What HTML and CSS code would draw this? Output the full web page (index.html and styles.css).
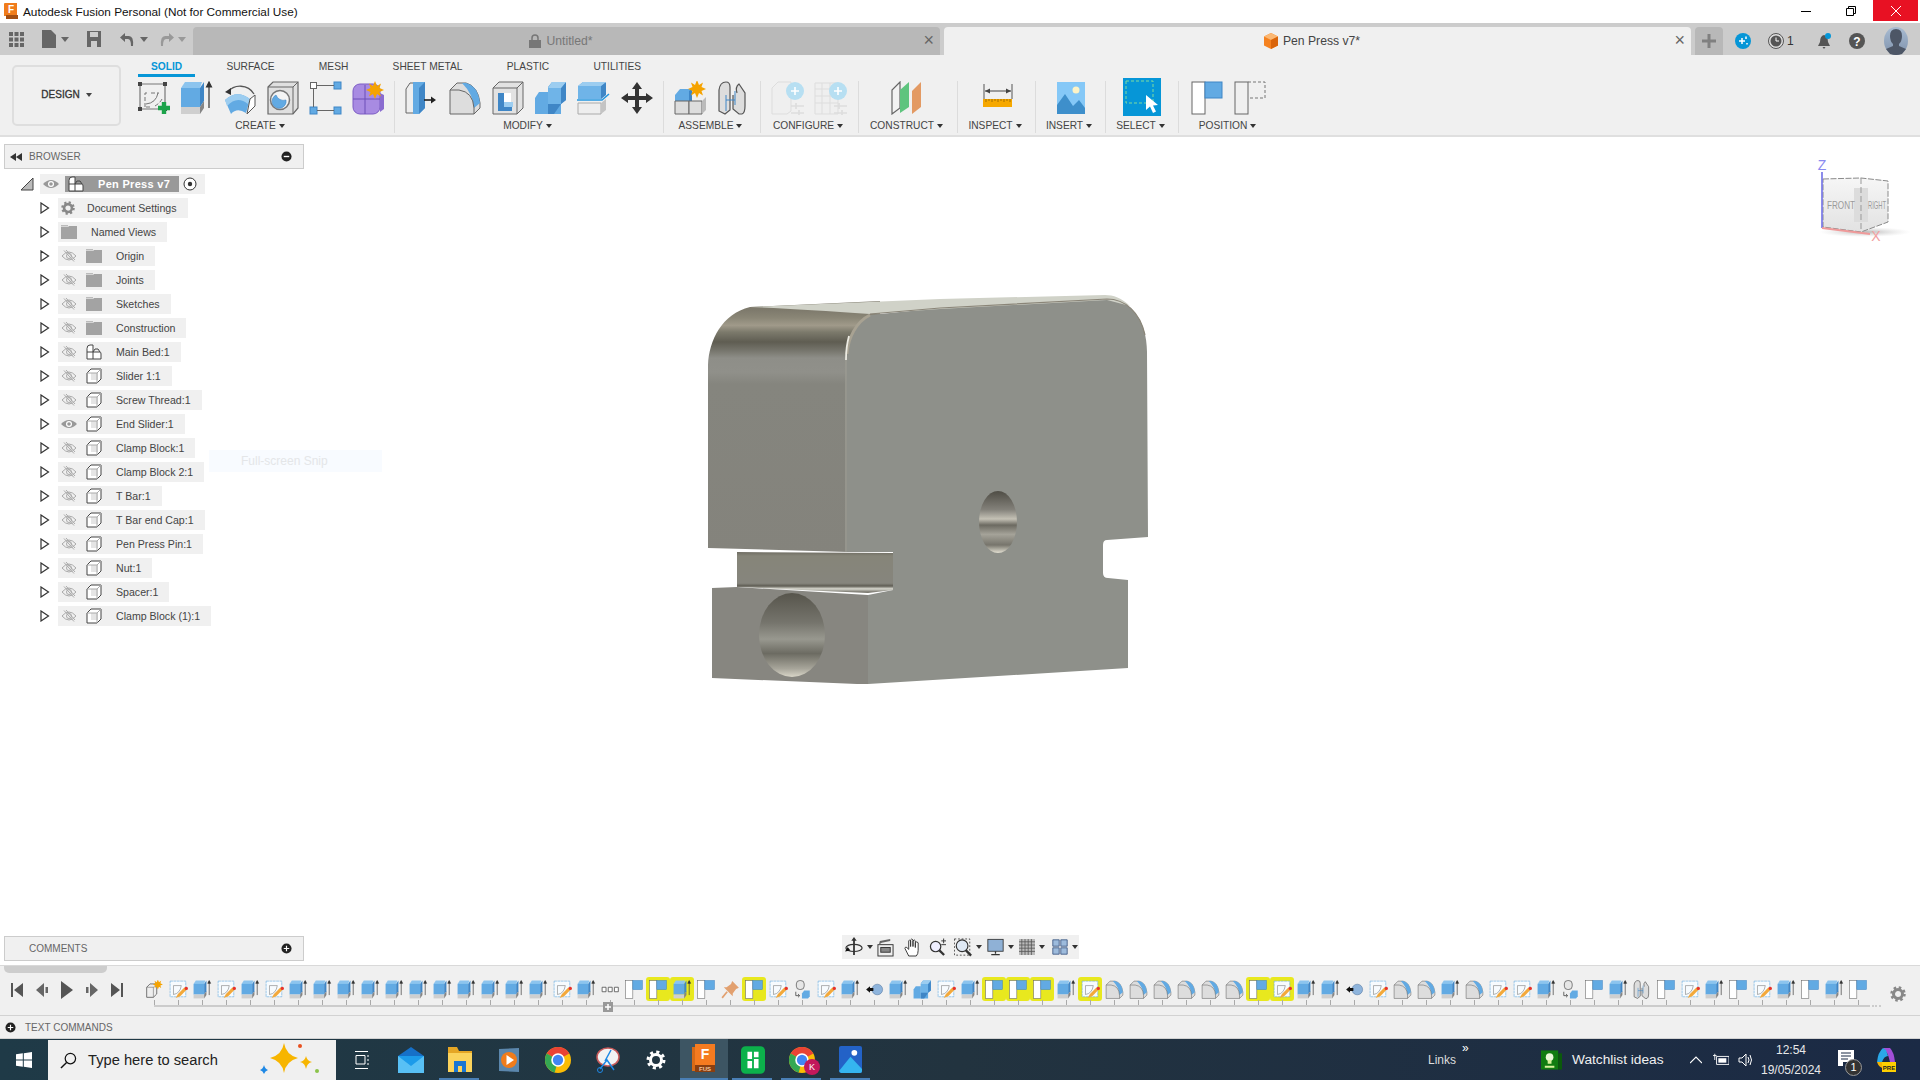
FILE: index.html
```html
<!DOCTYPE html>
<html lang="en">
<head>
<meta charset="utf-8">
<title>Autodesk Fusion Personal</title>
<link rel="stylesheet" href="styles.css">
</head>
<body>
<svg class="defs" aria-hidden="true">
<defs>
<g id="star"><polygon points="0,-9 2,-4 6,-6.5 4.5,-2 9,0 4.5,2 6,6.5 2,4 0,9 -2,4 -6,6.5 -4.5,2 -9,0 -4.5,-2 -6,-6.5 -2,-4" fill="#f5a300"/></g>
<symbol id="sk" viewBox="0 0 34 34"><path d="M3 3H28V28H3Z" fill="none" stroke="#777" stroke-width="1.2"/><path d="M1 1h4v4H1zM26 1h4v4h-4zM1 26h4v4H1zM26 26h4v4h-4z" fill="#444"/><path d="M8 26V12H11M14 12H22M25 18Q23 22 18 25M9 26H14" fill="none" stroke="#777" stroke-dasharray="4 2"/><path d="M21 12Q19 22 9 23" fill="none" stroke="#777"/><path d="M21 27H33M27 21V33" stroke="#1ca34a" stroke-width="4.4"/></symbol>
<symbol id="ex" viewBox="0 0 34 34"><path d="M1 7L5 1H22L20 7Z" fill="#8cc4ee"/><path d="M1 7H20V26H1Z" fill="#62aae3"/><path d="M20 7L24 1V20L20 26Z" fill="#3f86c6"/><path d="M1 26H20V33H1Z" fill="#cfcfcf"/><path d="M20 26L24 20V27L20 33Z" fill="#858585"/><path d="M29 27V2M26.5 6L29 1L31.5 6Z" stroke="#333" stroke-width="1.2" fill="#333"/></symbol>
<symbol id="rv" viewBox="0 0 34 34"><path d="M5 11C11 3 25 3 31 13" fill="none" stroke="#555" stroke-width="1.3"/><path d="M2 11L8 7L8 14Z" fill="#333"/><path d="M2 19Q14 8 27 18L23 32Q14 26 8 33Z" fill="#62aae3"/><path d="M2 19Q14 8 27 18L25 23Q14 14 4 25Z" fill="#9ccdf0"/><path d="M27 18L32 14V25L24 33Z" fill="#fff" stroke="#555"/></symbol>
<symbol id="ho" viewBox="0 0 34 34"><path d="M2 6L7 1H32V27L27 33H2Z" fill="#e0e0e0" stroke="#666" stroke-width="1.2"/><path d="M2 6H27V33M27 6L32 1" fill="none" stroke="#666"/><circle cx="14" cy="19" r="9.5" fill="#f4f4f4" stroke="#777" stroke-width="1.5"/><path d="M10 14A7 7 0 1 0 20 19A8 8 0 0 1 10 14Z" fill="#62aae3" stroke="#3f86c6" stroke-width=".6"/></symbol>
<symbol id="bx" viewBox="0 0 34 34"><rect x="1.5" y="1.5" width="6" height="6" fill="#fff" stroke="#666"/><rect x="25" y="1" width="7" height="7" fill="#62aae3" stroke="#3f86c6"/><rect x="1" y="26" width="7" height="7" fill="#62aae3" stroke="#3f86c6"/><rect x="25" y="26" width="7" height="7" fill="#62aae3" stroke="#3f86c6"/><path d="M8 4.500H25M4.500 8V26M8 29.500H25" stroke="#666" fill="none"/></symbol>
<symbol id="fm" viewBox="0 0 34 34"><rect x="1" y="3" width="27" height="30" rx="7" fill="#a88be2" stroke="#7c5cc4"/><path d="M1 18H28M13 4V33" stroke="#6d4fb8" stroke-width="1"/><path d="M28 12L32 14V28L28 31Z" fill="#8a6cd0"/><use href="#star" x="23" y="9" /></symbol>
<symbol id="pp" viewBox="0 0 34 34"><path d="M1 32V8L5 2H9V32Z" fill="#eee" stroke="#666"/><path d="M8 1H20V27L14 33H8Z" fill="#62aae3"/><path d="M14 7L20 1V27L14 33Z" fill="#3f86c6"/><path d="M19 19H27" stroke="#222" stroke-width="1.6"/><path d="M26 15.500L31 19L26 22.500Z" fill="#222"/></symbol>
<symbol id="fi" viewBox="0 0 34 34"><path d="M2 33V9L9 2H18Q30 5 32 22V27L26 33Z" fill="#ddd" stroke="#666"/><path d="M14 2H18Q30 5 32 22L26 27Q25 13 14 2Z" fill="#62aae3"/><path d="M2 9H11Q25 11 26 27V33" fill="none" stroke="#666"/></symbol>
<symbol id="sh" viewBox="0 0 34 34"><path d="M2 33V7L8 1H32V27L26 33Z" fill="#e2e2e2" stroke="#666"/><path d="M2 7H26V33M26 7L32 1" fill="none" stroke="#666"/><path d="M7 12H13V26H21V30H7Z" fill="#3f86c6"/><path d="M13 12L20 12V26H13Z" fill="#fff"/><path d="M13 21H22V26H13Z" fill="#9ccdf0"/></symbol>
<symbol id="cb" viewBox="0 0 34 34"><path d="M1 17L5 11H14V33H1Z" fill="#62aae3"/><path d="M14 6L18 1H32V19L27 23V33L22 33H14Z" fill="#62aae3"/><path d="M14 7H27V23H14Z" fill="#6fb4e8"/><path d="M27 7L32 1V19L27 23Z" fill="#3f86c6"/><path d="M14 7L18 1H32L27 7Z" fill="#9ccdf0"/><path d="M14 23V33L20 33L27 23Z" fill="#3f86c6"/></symbol>
<symbol id="sp" viewBox="0 0 34 34"><path d="M1 5L6 1H28V14L24 18H1Z" fill="#62aae3"/><path d="M1 5H24V18H1Z" fill="#6fb4e8"/><path d="M24 5L29 1V14L24 18Z" fill="#3f86c6"/><path d="M1 5L6 1H29L24 5Z" fill="#9ccdf0"/><path d="M0 19H25L32 13" stroke="#2496df" stroke-width="1.6" fill="none"/><path d="M1 22H24V33H1Z" fill="#eee" stroke="#aaa"/><path d="M24 22L29 18V29L24 33Z" fill="#c4c4c4"/></symbol>
<symbol id="mv" viewBox="0 0 34 34"><path d="M17 1L22 8H19V15H26V12L33 17L26 22V19H19V26H22L17 33L12 26H15V19H8V22L1 17L8 12V15H15V8H12Z" fill="#333"/></symbol>
<symbol id="nc" viewBox="0 0 34 34"><path d="M1 14L6 8H17V20H1Z" fill="#62aae3"/><path d="M15 10L18 8V20H15Z" fill="#3f86c6"/><path d="M1 20H15V33H1Z" fill="#ddd" stroke="#666"/><path d="M15 20H28V33H15Z" fill="#ddd" stroke="#666"/><path d="M28 20L32 16V29L28 33Z" fill="#bbb"/><use href="#star" x="23" y="8"/></symbol>
<symbol id="nw" viewBox="0 0 34 34"><path d="M3 31V13L9 7H21V25L15 31Z" fill="#eee" stroke="#666" stroke-width="1.6"/><path d="M3 13H15V31M15 13L21 7" fill="none" stroke="#666"/><use href="#star" x="23" y="8"/></symbol>
<symbol id="jt" viewBox="0 0 34 34"><path d="M2 30V9Q3 1 9 1Q13 1 13 6V29L8 33Z" fill="#ddd" stroke="#555" stroke-width="1.2"/><path d="M16 14V28L22 33H25Q28 32 28 25V12L22 3Q18 6 20 12" fill="#ddd" stroke="#555" stroke-width="1.2"/><path d="M9 14V30M18 10V24M9 19H18" stroke="#3f86c6"/></symbol>
<symbol id="cf1" viewBox="0 0 34 34"><path d="M1 33V7L7 1H20V30L16 33Z" fill="#efefef" stroke="#ddd"/><circle cx="24" cy="10" r="9" fill="#b7dff2"/><path d="M24 6V14M20 10H28" stroke="#fff" stroke-width="1.6"/><path d="M20 25H33M20 32H33M25 22V28M28 29V34" stroke="#ddd" stroke-width="1.6"/></symbol>
<symbol id="cf2" viewBox="0 0 34 34"><path d="M1 2H24V33H1Z" fill="#efefef" stroke="#ddd"/><path d="M1 8H24M1 15H24M1 22H24M8 2V33M16 2V33" stroke="#ddd"/><circle cx="24" cy="10" r="9" fill="#b7dff2"/><path d="M24 6V14M20 10H28" stroke="#fff" stroke-width="1.6"/><path d="M20 25H33M20 32H33M25 22V28M28 29V34" stroke="#ddd" stroke-width="1.6"/></symbol>
<symbol id="cn" viewBox="0 0 34 34"><path d="M1 33V9L9 1V27L1 33Z" fill="#f2f2f2" stroke="#666" stroke-width="1.2"/><path d="M9 32V9L18 1V26Z" fill="#5ec47e"/><path d="M21 33V10L30 1V26Z" fill="#e39a63"/></symbol>
<symbol id="im" viewBox="0 0 30 34"><rect x="1" y="1" width="28" height="32" fill="#85c8f7"/><circle cx="20" cy="9" r="3.500" fill="#fdf3c6"/><path d="M1 24L9 13L17 25L23 19L29 27V33H1Z" fill="#3e8fcb"/></symbol>
<symbol id="sl" viewBox="0 0 38 38"><rect width="38" height="38" fill="#0696d7"/><rect x="3" y="3" width="27" height="22" fill="none" stroke="#7fdc9f" stroke-dasharray="3 2"/><path d="M23 17V32L27 28.500L30 35L33 33.500L30 27.500L35 27Z" fill="#fff"/></symbol>
<symbol id="fl" viewBox="0 0 34 34"><rect x="1" y="1" width="13" height="32" fill="#fff" stroke="#666"/><rect x="14" y="1" width="17" height="16" fill="#62aae3" stroke="#3f86c6"/></symbol>
<symbol id="fd" viewBox="0 0 34 34"><rect x="1" y="1" width="13" height="32" fill="none" stroke="#666"/><path d="M14 1H31V17H14" fill="none" stroke="#777" stroke-dasharray="3 2"/></symbol>
<symbol id="tsk" viewBox="0 0 34 34"><path d="M2 2H30V30H2Z" fill="#f7fbfe" stroke="#5aa6dd" stroke-dasharray="5 1"/><path d="M8 26V10H22M8 26Q20 24 22 10" fill="none" stroke="#777"/><path d="M12 32L16 25L28 13L32 17L20 29Z" fill="#f3a93b"/><circle cx="31" cy="15" r="3" fill="#e7332b"/></symbol>
<symbol id="ooo" viewBox="0 0 34 34"><path d="M2 13h7v8H2zM13 13h7v8h-7zM24 13h7v8h-7z" fill="#fff" stroke="#555" stroke-width="1.500"/></symbol>
<symbol id="pin" viewBox="0 0 34 34"><path d="M20 2L32 14L27 16L21 24L21 29L5 13L10 13L18 7Z" fill="#e2a06f"/><path d="M11 21L2 32" stroke="#e2a06f" stroke-width="3"/></symbol>
<symbol id="mc" viewBox="0 0 34 34"><rect x="6" y="1" width="14" height="16" rx="6" fill="#e6e6e6" stroke="#555" stroke-width="1.3"/><path d="M5 21V28H11M9 25L12 28L9 31" fill="none" stroke="#333" stroke-width="1.3"/><path d="M16 24L20 19H30V29L27 33H16Z" fill="#62aae3"/></symbol>
<symbol id="ar" viewBox="0 0 34 34"><circle cx="22" cy="17" r="9.500" fill="#8eb4dc" stroke="#5577a0"/><path d="M2 17L9 11V14.500H15V19.500H9V23Z" fill="#111"/></symbol>
<symbol id="eo" viewBox="0 0 16 14"><path d="M1 7Q8 -1 15 7Q8 15 1 7Z" fill="none" stroke="#aaa"/><circle cx="8" cy="7" r="2.500" fill="none" stroke="#aaa"/><path d="M3 1.500L13 12.500M5 1L14 11" stroke="#aaa"/></symbol>
<symbol id="ey" viewBox="0 0 16 14"><path d="M0 7Q8 -1 16 7Q8 15 0 7Z" fill="#999"/><circle cx="8" cy="7" r="3" fill="#fff"/><circle cx="8" cy="7" r="1.800" fill="#999"/></symbol>
<symbol id="fo" viewBox="0 0 16 14"><path d="M0 0H7V1.500H0Z" fill="#bbb"/><path d="M0 2H7L8 1H16V14H0Z" fill="#a3a3a3"/></symbol>
<symbol id="cu" viewBox="0 0 16 16"><path d="M1 5L5 1H15V11L11 15H1Z" fill="#fff" stroke="#444"/><path d="M5 5H12V12H5Z" fill="#e5e5e5"/><path d="M11 5L15 1M1 5H11V15" fill="none" stroke="#aaa"/></symbol>
<symbol id="cm" viewBox="0 0 16 16"><path d="M1 4.500Q1 1 4 1H7V8H14Q15 8 15 10V15H1Z" fill="#fff" stroke="#444"/><path d="M7 8V15M1 8H7M7 8L9 5H12L14 8" fill="none" stroke="#444"/></symbol>
<symbol id="ge" viewBox="0 0 16 16"><circle cx="8" cy="8" r="4.500" fill="none" stroke="#888" stroke-width="3"/><circle cx="8" cy="8" r="6.500" fill="none" stroke="#888" stroke-width="2.500" stroke-dasharray="2.500 2.600"/></symbol>
<symbol id="tr" viewBox="0 0 10 12"><path d="M1 1L8.500 6L1 11Z" fill="#fff" stroke="#333" stroke-width="1.200"/></symbol>
<symbol id="pl" viewBox="0 0 12 12"><circle cx="6" cy="6" r="5.500" fill="#222"/><path d="M3 6H9M6 3V9" stroke="#fff" stroke-width="1.300"/></symbol>
<symbol id="mi" viewBox="0 0 12 12"><circle cx="6" cy="6" r="5.500" fill="#222"/><path d="M3 6H9" stroke="#fff" stroke-width="1.500"/></symbol>
<symbol id="gw" viewBox="0 0 20 20"><circle cx="10" cy="10" r="5.500" fill="none" stroke="#fff" stroke-width="3"/><circle cx="10" cy="10" r="8" fill="none" stroke="#fff" stroke-width="3" stroke-dasharray="3.100 3.180"/></symbol>
<symbol id="chr" viewBox="0 0 24 24"><circle cx="12" cy="12" r="12" fill="#fbbc04"/><path d="M12 12L1.600 6A12 12 0 0 1 22.400 6Z" fill="#ea4335"/><path d="M12 12L1.600 6A12 12 0 0 0 9 23.600L12 12Z" fill="#34a853"/><circle cx="12" cy="12" r="5.500" fill="#4285f4" stroke="#fff" stroke-width="1.500"/></symbol>
</defs>
</svg>

<header class="titlebar">
  <svg class="app-icon" viewBox="0 0 14 16"><path d="M0 1Q0 0 1 0H13V13H0Z" fill="#f07c1b"/><path d="M2 12H14V16H2Z" fill="#a34e12"/><text x="7" y="10" class="app-f">F</text></svg>
  <span class="title-text">Autodesk Fusion Personal (Not for Commercial Use)</span>
  <div class="win-ctrls">
    <span class="win-btn"><svg class="win-ic" viewBox="0 0 10 10"><path d="M0 5.500H10" stroke="#000"/></svg></span>
    <span class="win-btn"><svg class="win-ic" viewBox="0 0 10 10"><path d="M.5 2.500H7.500V9.500H.5ZM2.500 2.500V.5H9.500V7.500H7.500" fill="none" stroke="#000"/></svg></span>
    <span class="win-btn close"><svg class="win-ic" viewBox="0 0 10 10"><path d="M0 0L10 10M10 0L0 10" stroke="#fff"/></svg></span>
  </div>
</header>

<div class="tabbar">
  <div class="qat">
    <svg class="qi q-grid" viewBox="0 0 15 15"><path d="M0 0h4v4H0zM5.500 0h4v4h-4zM11 0h4v4h-4zM0 5.500h4v4H0zM5.500 5.500h4v4h-4zM11 5.500h4v4h-4zM0 11h4v4H0zM5.500 11h4v4h-4zM11 11h4v4h-4z" fill="#666"/></svg>
    <svg class="qi q-file" viewBox="0 0 14 18"><path d="M0 0H9L14 5V18H0Z" fill="#666"/></svg><i class="caret"></i>
    <svg class="qi q-save" viewBox="0 0 14 16"><path d="M0 0H14V16H0Z" fill="#666"/><path d="M3 1H11V6H3ZM4 10H10V16H4Z" fill="#ccc"/></svg>
    <svg class="qi q-undo" viewBox="0 0 14 14"><path d="M5 1L0 5.500L5 10V7H8Q11 7 11 14H13Q14 3 8 4H5Z" fill="#666"/></svg><i class="caret"></i>
    <svg class="qi q-redo" viewBox="0 0 14 14"><path d="M9 1L14 5.500L9 10V7H6Q3 7 3 14H1Q0 3 6 4H9Z" fill="#999"/></svg><i class="caret light"></i>
  </div>
  <div class="tab inactive">
    <span class="tab-label"><svg class="lock" viewBox="0 0 12 14"><path d="M3 6V4Q3 1 6 1Q9 1 9 4V6" fill="none" stroke="#777" stroke-width="1.500"/><path d="M0 6H12V14H0Z" fill="#777"/></svg>Untitled*</span>
    <span class="tab-x">×</span>
  </div>
  <div class="tab active">
    <span class="tab-label"><svg class="doc-cube" viewBox="0 0 14 16"><path d="M7 0L14 3.500V12.500L7 16L0 12.500V3.500Z" fill="#f58220"/><path d="M0 3.500L7 0L14 3.500L7 7Z" fill="#fbb874"/><path d="M7 7L14 3.500V12.500L7 16Z" fill="#d9650c"/></svg>Pen Press v7*</span>
    <span class="tab-x">×</span>
  </div>
  <div class="tab-new"><svg class="plus-ic" viewBox="0 0 14 14"><path d="M7 0V14M0 7H14" stroke="#808080" stroke-width="3"/></svg></div>
  <div class="tab-tools">
    <svg class="tt t-blue" viewBox="0 0 16 16"><circle cx="8" cy="8" r="8" fill="#0696d7"/><path d="M7 5V11M4 8H10M11 3.500V6M12 10V11.500" stroke="#fff" stroke-width="1.500"/></svg>
    <span class="t-job"><svg class="tt" viewBox="0 0 16 16"><circle cx="8" cy="8" r="7.500" fill="#ddd" stroke="#555"/><circle cx="8" cy="8" r="5.500" fill="#555"/><path d="M8 4.500V8H11" stroke="#fff" fill="none"/></svg><span class="job-num">1</span></span>
    <svg class="tt t-bell" viewBox="0 0 16 16"><path d="M8 2Q12 3 12 9L14 13H2L4 9Q4 3 8 2ZM6.500 14H9.500L8 16Z" fill="#555"/><circle cx="12" cy="3" r="3" fill="#0696d7"/></svg>
    <svg class="tt t-help" viewBox="0 0 16 16"><circle cx="8" cy="8" r="8" fill="#555"/><text x="8" y="12.500" class="help-q">?</text></svg>
    <svg class="avatar" viewBox="0 0 24 28"><defs><linearGradient id="av" x1="0" y1="0" x2="0" y2="1"><stop offset="0" stop-color="#a9bcd2"/><stop offset="1" stop-color="#7f92ac"/></linearGradient></defs><ellipse cx="12" cy="14" rx="12" ry="14" fill="url(#av)"/><path d="M12 2Q18 2 18 9Q18 14 15 17V19L22 22L18 27Q12 29 6 27L2 22L9 19V17Q6 14 6 9Q6 2 12 2Z" fill="#4d5666"/></svg>
  </div>
</div>

<section class="toolbar">
  <div class="design-btn">DESIGN<i class="caret small"></i></div>
  <div class="ribbon">
    <nav class="rtabs">
      <span class="rtab on">SOLID</span><span class="rtab">SURFACE</span><span class="rtab">MESH</span><span class="rtab">SHEET METAL</span><span class="rtab">PLASTIC</span><span class="rtab">UTILITIES</span>
    </nav>
    <div class="groups">
      <div class="grp g-create"><div class="tools"><svg class="tool"><use href="#sk"/></svg><svg class="tool"><use href="#ex"/></svg><svg class="tool"><use href="#rv"/></svg><svg class="tool"><use href="#ho"/></svg><svg class="tool"><use href="#bx"/></svg><svg class="tool"><use href="#fm"/></svg></div><div class="glabel">CREATE<i class="caret tiny"></i></div></div>
      <div class="grp g-modify"><div class="tools"><svg class="tool"><use href="#pp"/></svg><svg class="tool"><use href="#fi"/></svg><svg class="tool"><use href="#sh"/></svg><svg class="tool"><use href="#cb"/></svg><svg class="tool"><use href="#sp"/></svg><svg class="tool"><use href="#mv"/></svg></div><div class="glabel">MODIFY<i class="caret tiny"></i></div></div>
      <div class="grp g-assemble"><div class="tools"><svg class="tool"><use href="#nc"/></svg><svg class="tool"><use href="#jt"/></svg></div><div class="glabel">ASSEMBLE<i class="caret tiny"></i></div></div>
      <div class="grp g-configure"><div class="tools"><svg class="tool"><use href="#cf1"/></svg><svg class="tool"><use href="#cf2"/></svg></div><div class="glabel">CONFIGURE<i class="caret tiny"></i></div></div>
      <div class="grp g-construct"><div class="tools"><svg class="tool"><use href="#cn"/></svg></div><div class="glabel">CONSTRUCT<i class="caret tiny"></i></div></div>
      <div class="grp g-inspect"><div class="tools"><svg class="tool" viewBox="0 0 34 34"><path d="M4 3V18M32 3V18" stroke="#555"/><path d="M5 10H31" stroke="#444"/><path d="M5 10L10 7.500V12.500ZM31 10L26 7.500V12.500Z" fill="#444"/><rect x="3" y="18" width="29" height="8" fill="#f6a800"/><path d="M6 18v3M9 18v2M12 18v3M15 18v2M18 18v3M21 18v2M24 18v3M27 18v2M30 18v3" stroke="#a36f00"/></svg></div><div class="glabel">INSPECT<i class="caret tiny"></i></div></div>
      <div class="grp g-insert"><div class="tools"><svg class="tool"><use href="#im"/></svg></div><div class="glabel">INSERT<i class="caret tiny"></i></div></div>
      <div class="grp g-select"><div class="tools sel"><svg class="tool-sel"><use href="#sl"/></svg></div><div class="glabel">SELECT<i class="caret tiny"></i></div></div>
      <div class="grp g-position last"><div class="tools"><svg class="tool"><use href="#fl"/></svg><svg class="tool"><use href="#fd"/></svg></div><div class="glabel">POSITION<i class="caret tiny"></i></div></div>
    </div>
  </div>
</section>

<main class="canvas">
  <svg class="scene" viewBox="0 137 1920 828">
    <defs>
      <linearGradient id="lf" x1="0" y1="305" x2="0" y2="560" gradientUnits="userSpaceOnUse">
        <stop offset=".02" stop-color="#7e7a6c"/><stop offset=".05" stop-color="#8a8676"/><stop offset=".08" stop-color="#a09a8a"/><stop offset=".106" stop-color="#7c7a6c"/><stop offset=".145" stop-color="#5f5d52"/><stop offset=".176" stop-color="#74736a"/><stop offset=".208" stop-color="#8e8e88"/><stop offset=".263" stop-color="#90908a"/><stop offset=".31" stop-color="#85857e"/><stop offset="1" stop-color="#84837c"/>
      </linearGradient>
      <linearGradient id="h1" x1="0" y1="0" x2="0" y2="1"><stop offset="0" stop-color="#4f4d45"/><stop offset=".3" stop-color="#83817a"/><stop offset=".45" stop-color="#c4c1b5"/><stop offset=".55" stop-color="#6c6a61"/><stop offset=".7" stop-color="#a5a399"/><stop offset=".87" stop-color="#77756c"/><stop offset="1" stop-color="#e3e0d2"/></linearGradient>
      <linearGradient id="h2" x1="0" y1="0" x2="0" y2="1"><stop offset="0" stop-color="#57554c"/><stop offset=".35" stop-color="#75746c"/><stop offset=".55" stop-color="#98988f"/><stop offset=".72" stop-color="#6c6b62"/><stop offset=".9" stop-color="#a7a59a"/><stop offset="1" stop-color="#d9d6c8"/></linearGradient>
      <linearGradient id="sl2" x1="0" y1="552" x2="0" y2="592" gradientUnits="userSpaceOnUse"><stop offset="0" stop-color="#6f6d63"/><stop offset=".1" stop-color="#868579"/><stop offset=".78" stop-color="#86857d"/><stop offset=".85" stop-color="#5f5d54"/><stop offset=".92" stop-color="#d8d8cf"/><stop offset="1" stop-color="#7a786f"/></linearGradient>
      <radialGradient id="cs"><stop offset="0" stop-color="#999" stop-opacity=".7"/><stop offset="1" stop-color="#ccc" stop-opacity="0"/></radialGradient>
      <linearGradient id="cf" x1="0" y1="0" x2="0" y2="1"><stop offset="0" stop-color="#f6f6f6"/><stop offset="1" stop-color="#e2e2e2"/></linearGradient>
    </defs>
    <path d="M708 548V365C709 340 722 314 750 307L880 301V315L848 360V552Z" fill="url(#lf)"/>
    <path d="M847 552V360C848 340 856 322 870 315L940 308L1107 299C1130 299 1147 320 1147 352L1148 537L1107 540Q1103 540 1103 545V573Q1103 578 1108 578L1128 580V668L868 684V595L893 590V552Z" fill="#8e908a"/>
    <path d="M750 307L940 299L1105 295C1113 295 1122 298 1130 306L1107 300L940 309L870 314Q800 309 750 307Z" fill="#d0d2c8"/>
    <path d="M847 354C848 338 856 322 870 315" fill="none" stroke="#a8a292" stroke-width="3"/>
    <path d="M870 314L940 308L1107 299C1125 299 1140 312 1145 335" fill="none" stroke="#8a8578" stroke-width="1.200"/>
    <path d="M846 360C846 350 847 343 849 336" fill="none" stroke="#ecebe2" stroke-width="1.800"/>
    <path d="M846 360V552" fill="none" stroke="#9a9a92" stroke-width="1.600"/>
    <path d="M737 552L893 553V590L868 593L737 587Z" fill="url(#sl2)"/>
    <path d="M712 588L737 587L868 595V684H857L712 678Z" fill="#878680"/>
    <ellipse cx="998" cy="522" rx="19" ry="31" fill="url(#h1)"/>
    <ellipse cx="792" cy="635" rx="33" ry="42" fill="url(#h2)"/>

    <ellipse cx="1865" cy="232" rx="46" ry="5" fill="url(#cs)"/>
    <path d="M1823 179L1861 178L1888 181V222L1861 232L1823 227Z" fill="url(#cf)" stroke="#8a8a8a" stroke-dasharray="6 1.500"/>
    <rect x="1854" y="188" width="14" height="34" fill="#dcdcdc"/>
    <path d="M1861 178V232" stroke="#999" stroke-dasharray="6 3"/>
    <text x="1841" y="209" class="cube-t" textLength="28" lengthAdjust="spacingAndGlyphs">FRONT</text>
    <text x="1877" y="209" class="cube-t" textLength="18" lengthAdjust="spacingAndGlyphs">RIGHT</text>
    <path d="M1822 172V228" stroke="#7070e6" stroke-width="1.600"/>
    <path d="M1822 228L1870 234" stroke="#ef9a9a" stroke-width="2"/>
    <text x="1822" y="170" class="axis-z">Z</text>
    <text x="1876" y="241" class="axis-x">X</text>
  </svg>

  <aside class="browser">
    <div class="panel-head"><svg class="back" viewBox="0 0 12 8"><path d="M6 0V8L0 4ZM12 0V8L6 4Z" fill="#333"/></svg><span class="ptitle">BROWSER</span><svg class="pbtn"><use href="#mi"/></svg></div>
    <ul class="tree">
      <li class="root"><svg class="rtri" viewBox="0 0 14 14"><path d="M13 1V13H1Z" fill="#bbb" stroke="#444"/></svg><div class="chip rootchip"><svg class="eye"><use href="#ey"/></svg><span class="rootname"><svg class="node"><use href="#cm"/></svg><b>Pen Press v7</b></span><svg class="target" viewBox="0 0 14 14"><circle cx="7" cy="7" r="6" fill="#fff" stroke="#333"/><circle cx="7" cy="7" r="2.200" fill="#333"/></svg></div></li>
      <li><svg class="tri"><use href="#tr"/></svg><div class="chip"><svg class="gear"><use href="#ge"/></svg><span>Document Settings</span></div></li>
      <li><svg class="tri"><use href="#tr"/></svg><div class="chip"><svg class="node nv"><use href="#fo"/></svg><span>Named Views</span></div></li>
      <li><svg class="tri"><use href="#tr"/></svg><div class="chip"><svg class="eye"><use href="#eo"/></svg><svg class="node"><use href="#fo"/></svg><span>Origin</span></div></li>
      <li><svg class="tri"><use href="#tr"/></svg><div class="chip"><svg class="eye"><use href="#eo"/></svg><svg class="node"><use href="#fo"/></svg><span>Joints</span></div></li>
      <li><svg class="tri"><use href="#tr"/></svg><div class="chip"><svg class="eye"><use href="#eo"/></svg><svg class="node"><use href="#fo"/></svg><span>Sketches</span></div></li>
      <li><svg class="tri"><use href="#tr"/></svg><div class="chip"><svg class="eye"><use href="#eo"/></svg><svg class="node"><use href="#fo"/></svg><span>Construction</span></div></li>
      <li><svg class="tri"><use href="#tr"/></svg><div class="chip"><svg class="eye"><use href="#eo"/></svg><svg class="node"><use href="#cm"/></svg><span>Main Bed:1</span></div></li>
      <li><svg class="tri"><use href="#tr"/></svg><div class="chip"><svg class="eye"><use href="#eo"/></svg><svg class="node"><use href="#cu"/></svg><span>Slider 1:1</span></div></li>
      <li><svg class="tri"><use href="#tr"/></svg><div class="chip"><svg class="eye"><use href="#eo"/></svg><svg class="node"><use href="#cu"/></svg><span>Screw Thread:1</span></div></li>
      <li><svg class="tri"><use href="#tr"/></svg><div class="chip"><svg class="eye"><use href="#ey"/></svg><svg class="node"><use href="#cu"/></svg><span>End Slider:1</span></div></li>
      <li><svg class="tri"><use href="#tr"/></svg><div class="chip"><svg class="eye"><use href="#eo"/></svg><svg class="node"><use href="#cu"/></svg><span>Clamp Block:1</span></div></li>
      <li><svg class="tri"><use href="#tr"/></svg><div class="chip"><svg class="eye"><use href="#eo"/></svg><svg class="node"><use href="#cu"/></svg><span>Clamp Block 2:1</span></div></li>
      <li><svg class="tri"><use href="#tr"/></svg><div class="chip"><svg class="eye"><use href="#eo"/></svg><svg class="node"><use href="#cu"/></svg><span>T Bar:1</span></div></li>
      <li><svg class="tri"><use href="#tr"/></svg><div class="chip"><svg class="eye"><use href="#eo"/></svg><svg class="node"><use href="#cu"/></svg><span>T Bar end Cap:1</span></div></li>
      <li><svg class="tri"><use href="#tr"/></svg><div class="chip"><svg class="eye"><use href="#eo"/></svg><svg class="node"><use href="#cu"/></svg><span>Pen Press Pin:1</span></div></li>
      <li><svg class="tri"><use href="#tr"/></svg><div class="chip"><svg class="eye"><use href="#eo"/></svg><svg class="node"><use href="#cu"/></svg><span>Nut:1</span></div></li>
      <li><svg class="tri"><use href="#tr"/></svg><div class="chip"><svg class="eye"><use href="#eo"/></svg><svg class="node"><use href="#cu"/></svg><span>Spacer:1</span></div></li>
      <li><svg class="tri"><use href="#tr"/></svg><div class="chip"><svg class="eye"><use href="#eo"/></svg><svg class="node"><use href="#cu"/></svg><span>Clamp Block (1):1</span></div></li>
    </ul>
  </aside>

  <div class="snip">Full-screen Snip</div>

  <div class="comments"><span class="ptitle">COMMENTS</span><svg class="pbtn"><use href="#pl"/></svg></div>

  <div class="viewbar">
    <svg class="vi v-orbit" viewBox="0 0 20 22"><path d="M10 0L13 4H11V20H9V4H7Z" fill="#333"/><ellipse cx="10" cy="12" rx="9" ry="4" fill="none" stroke="#333" stroke-width="1.300"/><path d="M3 11L0 16L6 15Z" fill="#111"/></svg><i class="caret dark"></i>
    <svg class="vi v-look" viewBox="0 0 18 20"><rect x="1" y="7" width="16" height="12" fill="#eee" stroke="#333"/><rect x="4" y="10" width="10" height="5" fill="#888" stroke="#333"/><path d="M2 7L3 3L14 1L14 3L5 5" fill="#666"/></svg>
    <svg class="vi v-hand" viewBox="0 0 18 20"><path d="M5 19L1 11Q1 9 3 10L5 12V3Q6 1 7 3V9V2Q8 0 9.500 2V9V3Q11 1 12 3V10V5Q13.500 3 15 5V13Q15 17 13 19Z" fill="#fff" stroke="#333"/></svg>
    <svg class="vi v-zoom" viewBox="0 0 18 20"><circle cx="7" cy="9" r="5.500" fill="#eef" stroke="#333" stroke-width="1.300"/><path d="M11 13L16 18" stroke="#333" stroke-width="2.400"/><path d="M13 3H18M15.500 .5V5.500M13 7H18" stroke="#333"/></svg>
    <svg class="vi v-fit" viewBox="0 0 20 20"><rect x=".5" y=".5" width="17" height="18" fill="none" stroke="#444" stroke-dasharray="2 2"/><circle cx="9" cy="8" r="6.500" fill="#dfe9f5" stroke="#333" stroke-width="1.300"/><path d="M13 13L19 19" stroke="#333" stroke-width="2.600"/></svg><i class="caret dark"></i>
    <svg class="vi v-disp" viewBox="0 0 20 20"><rect x="1" y="1" width="18" height="14" fill="#8fb1d6" stroke="#333"/><path d="M10 15V18M5 19H15" stroke="#333" stroke-width="1.500"/></svg><i class="caret dark"></i>
    <svg class="vi v-grid" viewBox="0 0 20 20"><path d="M0 0H20V20H0Z" fill="#bbb"/><path d="M3.500 0V20M7.500 0V20M11.500 0V20M15.500 0V20M0 3.500H20M0 7.500H20M0 11.500H20M0 15.500H20" stroke="#555"/></svg><i class="caret dark"></i>
    <svg class="vi v-lay" viewBox="0 0 20 20"><path d="M1 1h8v8H1zM11 1h8v8h-8zM1 11h8v8H1zM11 11h8v8h-8z" fill="#9dbbdc" stroke="#334f7c"/></svg><i class="caret dark"></i>
  </div>
</main>

<section class="timeline">
  <div class="scrolltab"></div>
  <div class="tl-ctrls">
    <svg class="tc" viewBox="0 0 12 14"><path d="M0 0H2V14H0ZM12 0V14L3 7Z" fill="#555"/></svg>
    <svg class="tc" viewBox="0 0 12 14"><path d="M8 0V14L0 7ZM9.500 4H12V10H9.500Z" fill="#666"/></svg>
    <svg class="tc big" viewBox="0 0 12 18"><path d="M0 0L12 9L0 18Z" fill="#555"/></svg>
    <svg class="tc" viewBox="0 0 12 14"><path d="M4 0V14L12 7ZM0 4H2.500V10H0Z" fill="#666"/></svg>
    <svg class="tc" viewBox="0 0 12 14"><path d="M0 0V14L9 7ZM10 0H12V14H10Z" fill="#555"/></svg>
  </div>
  <div class="tl-track">
    <span class="it"><svg><use href="#nw"/></svg></span><span class="it"><svg><use href="#tsk"/></svg></span><span class="it"><svg><use href="#ex"/></svg></span><span class="it"><svg><use href="#tsk"/></svg></span><span class="it"><svg><use href="#ex"/></svg></span><span class="it"><svg><use href="#tsk"/></svg></span>
    <span class="it"><svg><use href="#ex"/></svg></span><span class="it"><svg><use href="#ex"/></svg></span><span class="it"><svg><use href="#ex"/></svg></span><span class="it"><svg><use href="#ex"/></svg></span><span class="it"><svg><use href="#ex"/></svg></span><span class="it"><svg><use href="#ex"/></svg></span><span class="it"><svg><use href="#ex"/></svg></span><span class="it"><svg><use href="#ex"/></svg></span><span class="it"><svg><use href="#ex"/></svg></span><span class="it"><svg><use href="#ex"/></svg></span><span class="it"><svg><use href="#ex"/></svg></span>
    <span class="it"><svg><use href="#tsk"/></svg></span><span class="it"><svg><use href="#ex"/></svg></span><span class="it"><svg><use href="#ooo"/></svg></span><span class="it"><svg><use href="#fl"/></svg></span><span class="it hl"><svg><use href="#fl"/></svg></span><span class="it hl"><svg><use href="#ex"/></svg></span><span class="it"><svg><use href="#fl"/></svg></span><span class="it"><svg><use href="#pin"/></svg></span><span class="it hl"><svg><use href="#fl"/></svg></span>
    <span class="it"><svg><use href="#tsk"/></svg></span><span class="it"><svg><use href="#mc"/></svg></span><span class="it"><svg><use href="#tsk"/></svg></span><span class="it"><svg><use href="#ex"/></svg></span><span class="it"><svg><use href="#ar"/></svg></span><span class="it"><svg><use href="#ex"/></svg></span><span class="it"><svg><use href="#cb"/></svg></span><span class="it"><svg><use href="#tsk"/></svg></span><span class="it"><svg><use href="#ex"/></svg></span>
    <span class="it hl"><svg><use href="#fl"/></svg></span><span class="it hl"><svg><use href="#fl"/></svg></span><span class="it hl"><svg><use href="#fl"/></svg></span><span class="it"><svg><use href="#ex"/></svg></span><span class="it hl"><svg><use href="#tsk"/></svg></span>
    <span class="it"><svg><use href="#fi"/></svg></span><span class="it"><svg><use href="#fi"/></svg></span><span class="it"><svg><use href="#fi"/></svg></span><span class="it"><svg><use href="#fi"/></svg></span><span class="it"><svg><use href="#fi"/></svg></span><span class="it"><svg><use href="#fi"/></svg></span>
    <span class="it hl"><svg><use href="#fl"/></svg></span><span class="it hl"><svg><use href="#tsk"/></svg></span><span class="it"><svg><use href="#ex"/></svg></span><span class="it"><svg><use href="#ex"/></svg></span><span class="it"><svg><use href="#ar"/></svg></span><span class="it"><svg><use href="#tsk"/></svg></span><span class="it"><svg><use href="#fi"/></svg></span><span class="it"><svg><use href="#fi"/></svg></span><span class="it"><svg><use href="#ex"/></svg></span><span class="it"><svg><use href="#fi"/></svg></span>
    <span class="it"><svg><use href="#tsk"/></svg></span><span class="it"><svg><use href="#tsk"/></svg></span><span class="it"><svg><use href="#ex"/></svg></span><span class="it"><svg><use href="#mc"/></svg></span><span class="it"><svg><use href="#fl"/></svg></span><span class="it"><svg><use href="#ex"/></svg></span><span class="it"><svg><use href="#jt"/></svg></span><span class="it"><svg><use href="#fl"/></svg></span><span class="it"><svg><use href="#tsk"/></svg></span><span class="it"><svg><use href="#ex"/></svg></span><span class="it"><svg><use href="#fl"/></svg></span><span class="it"><svg><use href="#tsk"/></svg></span><span class="it"><svg><use href="#ex"/></svg></span><span class="it"><svg><use href="#fl"/></svg></span><span class="it"><svg><use href="#ex"/></svg></span><span class="it"><svg><use href="#fl"/></svg></span>
  </div>
  <span class="tl-dots"></span>
  <span class="tl-plus"><svg viewBox="0 0 10 10"><path d="M0 0H10V10H0Z" fill="#999"/><path d="M5 2V8M2 5H8" stroke="#fff" stroke-width="1.500"/></svg></span>
  <svg class="tl-gear" viewBox="0 0 16 16"><use href="#ge"/></svg>
</section>

<section class="cmdbar"><svg class="cmd-plus"><use href="#pl"/></svg><span class="ptitle">TEXT COMMANDS</span></section>

<footer class="taskbar">
  <div class="start"><svg class="win" viewBox="0 0 16 16"><path d="M0 2.300L6.800 1.300V7.500H0ZM7.800 1.200L16 0V7.500H7.800ZM0 8.500H6.800V14.700L0 13.700ZM7.800 8.500H16V16L7.800 14.800Z" fill="#fff"/></svg></div>
  <div class="search">
    <svg class="mag" viewBox="0 0 18 18"><circle cx="11" cy="7" r="5.500" fill="none" stroke="#111" stroke-width="1.300"/><path d="M7 11L1 17" stroke="#111" stroke-width="1.500"/></svg>
    <span class="search-text">Type here to search</span>
    <svg class="spark" viewBox="0 0 60 34"><path d="M24 0Q26 12 38 15Q26 18 24 30Q22 18 10 15Q22 12 24 0Z" fill="#f7b500"/><path d="M46 13Q47 18 52 19Q47 20 46 26Q45 20 40 19Q45 18 46 13Z" fill="#f7b500"/><path d="M4 22Q5 26 8 27Q5 28 4 31Q3 28 0 27Q3 26 4 22Z" fill="#1e88e5"/><circle cx="40" cy="3" r="2" fill="#e8501f"/><circle cx="57" cy="28" r="2" fill="#8bc34a"/></svg>
  </div>
  <div class="tasks">
    <span class="task"><svg class="tk tv" viewBox="0 0 16 18"><path d="M1 .5H14M2 4.500H11V13H2ZM1 17.500H14M14 4V6M14 8V10M14 12V14" fill="none" stroke="#fff"/></svg></span>
    <span class="task"><svg class="tk" viewBox="0 0 26 26"><path d="M13 0L26 9V26H0V9Z" fill="#1670c8"/><path d="M0 9H26V26H0Z" fill="#1c9bea"/><path d="M0 9L13 19L26 9V26H0Z" fill="#58c0f5"/></svg></span>
    <span class="task run"><svg class="tk" viewBox="0 0 26 26"><path d="M1 0H10L12 4H25V24H1Z" fill="#e5a625"/><path d="M1 6H25V25H1Z" fill="#fbd35c"/><path d="M7 25V14H19V25H15V19H11V25Z" fill="#1976d2"/></svg></span>
    <span class="task"><svg class="tk" viewBox="0 0 26 26"><path d="M3 2L23 1V25L3 24Z" fill="#5b87ad"/><circle cx="13" cy="13" r="8" fill="#f07c1b"/><path d="M10.500 8L18 13L10.500 18Z" fill="#fff"/></svg></span>
    <span class="task"><svg class="tk"><use href="#chr"/></svg></span>
    <span class="task"><svg class="tk" viewBox="0 0 26 26"><ellipse cx="14" cy="10" rx="11" ry="9" fill="#f3f3f3" stroke="#c85a5a" stroke-width="1.500"/><path d="M17 3L11 14M6 22L13 13L20 23" stroke="#1e88e5" stroke-width="1.500" fill="none"/><circle cx="6" cy="23" r="2.500" fill="none" stroke="#1e88e5"/></svg></span>
    <span class="task"><svg class="tk gw"><use href="#gw"/></svg></span>
    <span class="task act"><svg class="tk big" viewBox="0 0 26 30"><path d="M4 0H24V22H4Z" fill="#f57b20"/><path d="M1 3H4V27H1Z" fill="#d86a16"/><path d="M4 21H24V28H4Z" fill="#8a3f10"/><text x="14" y="15" class="fus-f">F</text><text x="14" y="27" class="fus-s">FUS</text></svg></span>
    <span class="task run2"><svg class="tk big2" viewBox="0 0 26 30"><rect width="26" height="30" rx="5" fill="#0cb14b"/><path d="M7 6H12V14H7ZM14 6H19V12H14ZM7 16H12V24H7ZM14 14H19V24H14Z" fill="#fff"/></svg></span>
    <span class="task run2 wide"><svg class="tk"><use href="#chr"/></svg><span class="kbadge">K</span></span>
    <span class="task run2"><svg class="tk big3" viewBox="0 0 24 28"><path d="M0 2Q0 0 2 0H22Q24 0 24 2V26Q24 28 22 28H2Q0 28 0 26Z" fill="#2362c7"/><circle cx="16" cy="7" r="3" fill="#fff"/><path d="M0 26L12 11L24 24V26Q24 28 22 28H2Z" fill="#35b5f0"/></svg></span>
  </div>
  <div class="tray">
    <span class="links">Links<i class="chev">»</i></span>
    <svg class="bulb" viewBox="0 0 22 20"><path d="M0 0H18V20H0Z" fill="#107c10"/><path d="M18 3H22V20H18Z" fill="#0b5a0b"/><circle cx="9" cy="7" r="4" fill="#e9f7d9"/><path d="M7 10H11V14H7ZM4 16H14V18H4Z" fill="#d7f29b"/></svg>
    <span class="watch">Watchlist ideas</span>
    <svg class="ti-chev" viewBox="0 0 12 8"><path d="M0 7L6 1L12 7" fill="none" stroke="#fff" stroke-width="1.200"/></svg>
    <svg class="ti-bat" viewBox="0 0 18 14"><path d="M4 3H18V12H4Z" fill="#1b2a45" stroke="#fff"/><path d="M6 5H15V10H6Z" fill="#fff"/><path d="M0 2H4M2 0V7" stroke="#fff"/></svg>
    <svg class="ti-vol" viewBox="0 0 16 14"><path d="M1 5H4L8 1V13L4 9H1Z" fill="none" stroke="#fff"/><path d="M10 4Q12 7 10 10M12 2Q15 7 12 12" fill="none" stroke="#fff"/></svg>
    <div class="clock"><span>12:54</span><span>19/05/2024</span></div>
    <span class="notif"><svg class="note" viewBox="0 0 16 16"><path d="M0 0H16V12H5V16H0Z" fill="#fff"/><path d="M3 3H13M3 6H13M3 9H10" stroke="#1b2a45"/></svg><span class="nbadge">1</span></span>
    <svg class="copilot" viewBox="0 0 20 24"><path d="M7 0H14Q18 4 19 14L14 14Q12 4 7 0Z" fill="#a24fd8"/><path d="M7 0Q2 4 1 14H6Q8 8 12 8L10 2Z" fill="#2aa8e8"/><path d="M1 14Q3 20 8 20H13Q7 18 6 14Z" fill="#f5b400"/><rect x="6" y="14" width="14" height="10" fill="#ffd000"/><text x="13" y="22" class="pre">PRE</text></svg>
  </div>
</footer>
</body>
</html>
```
FILE: styles.css
```css
* { box-sizing: border-box; }
html, body { margin: 0; padding: 0; }
body {
  width: 1920px; height: 1080px; overflow: hidden;
  display: flex; flex-direction: column;
  font-family: "Liberation Sans", Arial, sans-serif;
  background: #fff; color: #444;
}
.defs { position: absolute; width: 0; height: 0; }
i { font-style: normal; }

.caret { display: inline-block; width: 0; height: 0; flex: none; border-left: 4px solid transparent; border-right: 4px solid transparent; border-top: 5px solid #666; }
.caret.light { border-top-color: #999; }
.caret.dark { border-top-color: #333; border-left-width: 3.5px; border-right-width: 3.5px; border-top-width: 4px; margin-left: 4px; }
.caret.small { border-left-width: 3px; border-right-width: 3px; border-top: 4px solid #444; margin-left: 6px; vertical-align: middle; }
.caret.tiny { border-left-width: 3px; border-right-width: 3px; border-top: 4px solid #333; margin-left: 3px; vertical-align: 1px; }

/* title bar */
.titlebar { height: 23px; flex: none; display: flex; align-items: flex-start; background: #fff; }
.app-icon { width: 14px; height: 16px; margin: 3px 5px 0 4px; }
.app-f { font: bold 10px "Liberation Sans", sans-serif; fill: #fff; text-anchor: middle; }
.title-text { font-size: 11.8px; line-height: 22px; padding-top: 1px; color: #111; }
.win-ctrls { margin-left: auto; display: flex; margin-right: 2px; }
.win-btn { width: 45px; height: 21px; display: flex; align-items: center; justify-content: center; }
.win-btn.close { background: #e81123; }
.win-ic { width: 10px; height: 10px; }

/* tabs */
.tabbar { height: 32px; flex: none; background: #cccccc; display: flex; align-items: flex-end; position: relative; }
.qat { width: 193px; height: 32px; display: flex; align-items: center; padding-left: 9px; flex: none; }
.qi { flex: none; }
.q-grid { width: 15px; height: 15px; margin-right: 18px; }
.q-file { width: 14px; height: 18px; margin-right: 5px; }
.q-save { width: 14px; height: 16px; margin: 0 19px 0 18px; }
.q-undo { width: 14px; height: 14px; margin-right: 6px; }
.q-redo { width: 14px; height: 14px; margin: 0 4px 0 12px; }
.tab { width: 747px; height: 28px; display: flex; align-items: center; justify-content: center; position: relative; font-size: 12.2px; border-radius: 4px 4px 0 0; flex: none; }
.tab.inactive { background: #b8b8b8; color: #777; }
.tab.active { background: #f0f0f0; color: #444; margin-left: 4px; }
.tab-label { display: flex; align-items: center; gap: 5px; margin-left: -11px; }
.tab-x { position: absolute; right: 6px; top: 4px; font-size: 18px; line-height: 18px; color: #666; }
.lock { width: 12px; height: 14px; }
.doc-cube { width: 14px; height: 16px; }
.tab-new { width: 28px; height: 28px; margin-left: 4px; background: #b8b8b8; border-radius: 4px 4px 0 0; display: flex; align-items: center; justify-content: center; flex: none; }
.plus-ic { width: 14px; height: 14px; }
.tab-tools { flex: 1; height: 28px; display: flex; align-items: center; padding-left: 12px; }
.tt { width: 16px; height: 16px; flex: none; }
.t-job { display: flex; align-items: center; margin-left: 17px; gap: 3px; }
.job-num { font-size: 12px; color: #333; }
.t-bell { margin-left: 22px; }
.t-help { margin-left: 17px; }
.help-q { font: bold 12px "Liberation Sans", sans-serif; fill: #fff; text-anchor: middle; }
.avatar { width: 24px; height: 28px; margin-left: 19px; flex: none; }

/* toolbar */
.toolbar { height: 82px; flex: none; background: #f0f0f0; border-bottom: 2px solid #dfdfdf; display: flex; padding: 10px 0 0 12px; }
.design-btn { width: 109px; height: 61px; border: 2px solid #dedede; border-radius: 5px; display: flex; align-items: center; justify-content: center; font-size: 10px; color: #333; -webkit-text-stroke: .3px #333; padding-bottom: 2px; }
.ribbon { margin-left: 8px; margin-top: -10px; display: flex; flex-direction: column; }
.rtabs { display: flex; height: 23px; padding-left: 9px; gap: 18.3px; font-size: 10.2px; color: #444; }
.rtab { padding: 6px 13px 0; height: 22px; line-height: 12px; }
.rtab.on { color: #0696d7; font-weight: bold; border-bottom: 3px solid #0696d7; }
.groups { display: flex; height: 57px; }
.grp { display: flex; flex-direction: column; align-items: center; border-right: 1px solid #dcdcdc; height: 52px; margin-top: 3px; }
.grp.last { border-right: 0; }
.g-create { width: 266px; }
.g-modify { width: 269px; }
.g-assemble { width: 97px; }
.g-configure { width: 98px; }
.g-construct { width: 99px; }
.g-inspect { width: 78px; }
.g-insert { width: 70px; }
.g-select { width: 73px; }
.g-position { width: 100px; }
.tools { display: flex; height: 38px; flex: none; align-items: flex-start; }
.tool { width: 34px; height: 34px; margin: 0 4.5px; flex: none; }
.tools.sel { margin-top: -3px; height: 41px; }
.tool-sel { width: 38px; height: 38px; }
.glabel { font-size: 10.2px; line-height: 14px; flex: none; color: #444; white-space: nowrap; margin: 0 3px 0 0; }

/* canvas */
.canvas { flex: 1; position: relative; background: #fff; }
.scene { position: absolute; left: 0; top: 0; width: 1920px; height: 828px; }
.cube-t { font: 11px "Liberation Sans", sans-serif; fill: #9a9a9a; text-anchor: middle; }
.axis-z { font: 14px "Liberation Sans", sans-serif; fill: #8a8af0; text-anchor: middle; }
.axis-x { font: 14px "Liberation Sans", sans-serif; fill: #f2a0a0; text-anchor: middle; }

.browser { position: absolute; left: 4px; top: 7px; width: 300px; font-size: 10.6px; }
.panel-head { height: 25px; background: #f0f0f0; border: 1px solid #ccc; display: flex; align-items: center; padding-left: 5px; }
.back { width: 12px; height: 8px; margin-right: 7px; }
.ptitle { color: #666; font-size: 10px; }
.pbtn { width: 11px; height: 11px; margin-left: auto; margin-right: 11px; }
.tree { list-style: none; margin: 5px 0 0 -4px; padding: 0; }
.tree li { display: flex; align-items: center; height: 20px; margin-bottom: 4px; padding-left: 40px; }
.tree li.root { padding-left: 20px; }
.tri { width: 10px; height: 12px; margin-right: 8px; flex: none; }
.rtri { width: 14px; height: 14px; margin-right: 6px; flex: none; }
.chip { display: flex; align-items: center; height: 20px; background: #f0f0f0; padding: 0 11px 0 3px; color: #444; }
.eye { width: 16px; height: 14px; margin-right: 9px; flex: none; }
.node { width: 16px; height: 16px; margin-right: 14px; flex: none; }
.gear { width: 14px; height: 14px; margin-right: 12px; flex: none; }
.rootchip { padding-right: 8px; }
.rootchip .eye { margin-right: 6px; }
.rootname { display: flex; align-items: center; height: 16px; width: 114px; background: #999; padding-left: 3px; color: #fff; }
.rootname b { font-size: 11px; letter-spacing: .3px; }
.target { width: 14px; height: 14px; margin-left: 4px; }

.snip { position: absolute; left: 209px; top: 313px; width: 173px; height: 22px; padding-left: 32px; background: #f8fbff; color: #e4e6e8; font-size: 12px; line-height: 22px; }
.comments { position: absolute; left: 4px; bottom: 4px; width: 300px; height: 25px; background: #f0f0f0; border: 1px solid #ccc; display: flex; align-items: center; padding-left: 24px; }
.viewbar { position: absolute; left: 842px; top: 798px; width: 237px; height: 24px; background: #f0f0f0; display: flex; align-items: center; padding-left: 3px; }
.vi { flex: none; }
.v-orbit { width: 18px; height: 20px; }
.v-look { width: 17px; height: 19px; margin-left: 4px; }
.v-hand { width: 17px; height: 19px; margin-left: 10px; }
.v-zoom { width: 17px; height: 19px; margin-left: 8px; }
.v-fit { width: 18px; height: 19px; margin-left: 8px; }
.v-disp { width: 17px; height: 18px; margin-left: 5px; }
.v-grid { width: 16px; height: 18px; margin-left: 5px; }
.v-lay { width: 16px; height: 16px; margin-left: 7px; }

/* timeline */
.timeline { height: 50px; flex: none; background: #f0f0f0; border-top: 1px solid #d9d9d9; display: flex; position: relative; }
.scrolltab { position: absolute; left: 4px; top: 0; width: 103px; height: 7px; background: #cdcdcd; border-radius: 0 0 5px 5px; }
.tl-ctrls { width: 142px; flex: none; display: flex; align-items: center; padding: 6px 0 8px 11px; gap: 13px; }
.tc { width: 12px; height: 14px; }
.tc.big { height: 18px; }
.tl-track { display: flex; height: 41px; padding-top: 11px; position: relative; }
.tl-track::after { content: ""; position: absolute; left: 12px; right: 0; bottom: 0; height: 2px; background: #ccc; }
.it { width: 24px; height: 28px; position: relative; flex: none; display: block; }
.it svg { position: absolute; left: 3px; top: 3px; width: 19px; height: 19px; }
.it::after { content: ""; position: absolute; left: 12px; top: 23px; width: 1px; height: 5px; background: #aaa; }
.it.hl::before { content: ""; position: absolute; left: 0; top: 0; width: 24px; height: 24px; background: #e8e81e; border-radius: 3px; }
.tl-dots { margin-top: 39px; margin-left: 2px; width: 9px; height: 2px; border-top: 2px dotted #ccc; }
.tl-plus { position: absolute; left: 603px; top: 36px; width: 10px; height: 10px; display: block; }
.tl-plus svg { display: block; width: 10px; height: 10px; }
.tl-gear { position: absolute; right: 14px; top: 20px; width: 16px; height: 16px; }

.cmdbar { height: 24px; flex: none; background: #f0f0f0; border-top: 1px solid #d2d2d2; border-bottom: 1px solid #d2d2d2; display: flex; align-items: center; padding-left: 5px; }
.cmd-plus { width: 11px; height: 11px; margin-right: 9px; }

/* taskbar */
.taskbar { height: 41px; flex: none; display: flex; background: linear-gradient(90deg, #1f3a47, #22333f 50%, #1b2a45); color: #fff; position: relative; }
.start { width: 48px; display: flex; align-items: center; justify-content: center; flex: none; }
.win { width: 16px; height: 16px; }
.search { width: 288px; background: #f0f0f0; display: flex; align-items: center; flex: none; margin-top: 1px; padding-left: 12px; color: #222; }
.mag { width: 17px; height: 17px; margin-right: 11px; }
.search-text { font-size: 14.7px; }
.spark { width: 60px; height: 34px; margin-left: auto; margin-right: 16px; }
.tasks { display: flex; flex: none; padding-left: 1px; }
.task { width: 49px; height: 41px; display: flex; align-items: center; justify-content: center; position: relative; flex: none; }
.tk { width: 26px; height: 26px; }
.tk.tv { width: 16px; height: 18px; }
.tk.gw { width: 20px; height: 20px; }
.tk.big { width: 26px; height: 30px; }
.tk.big2 { width: 24px; height: 30px; }
.tk.big3 { width: 23px; height: 27px; }
.task.act { background: #3d5563; border-bottom: 2px solid #4a7fb5; width: 48px; }
.task.run::after, .task.run2::after { content: ""; position: absolute; left: 4px; right: 5px; bottom: 0; height: 2px; background: #4a7fb5; }
.task.wide { width: 49px; }
.fus-f { font: bold 14px "Liberation Sans", sans-serif; fill: #fff; text-anchor: middle; }
.fus-s { font: bold 6px "Liberation Sans", sans-serif; fill: #f3c7a0; text-anchor: middle; }
.kbadge { position: absolute; left: 27px; top: 20px; width: 16px; height: 16px; border-radius: 50%; background: #c2185b; font-size: 9px; line-height: 16px; text-align: center; color: #fff; }
.tray { flex: 1; display: flex; align-items: center; padding-left: 553px; position: relative; }
.links { font-size: 12px; color: #ddd; position: relative; width: 113px; flex: none; }
.chev { position: absolute; left: 34px; top: -12px; font-size: 12px; color: #fff; }
.bulb { width: 21px; height: 20px; margin-right: 10px; flex: none; }
.watch { font-size: 13.7px; color: #f0f0f0; width: 118px; flex: none; }
.ti-chev { width: 12px; height: 8px; margin-right: 11px; flex: none; }
.ti-bat { width: 16px; height: 14px; margin-right: 9px; flex: none; }
.ti-vol { width: 16px; height: 14px; margin-right: 3px; flex: none; }
.clock { display: flex; flex-direction: column; align-items: center; width: 68px; font-size: 12px; line-height: 20px; color: #e8e8e8; flex: none; }
.notif { position: relative; width: 20px; height: 20px; margin-left: 13px; flex: none; }
.note { width: 16px; height: 16px; }
.nbadge { position: absolute; left: 7px; top: 9px; width: 17px; height: 17px; border-radius: 50%; background: #333; border: 1px solid #999; font-size: 11px; line-height: 15px; text-align: center; }
.copilot { width: 20px; height: 24px; margin-left: 18px; flex: none; }
.pre { font: bold 6px "Liberation Sans", sans-serif; fill: #222; text-anchor: middle; }
```
